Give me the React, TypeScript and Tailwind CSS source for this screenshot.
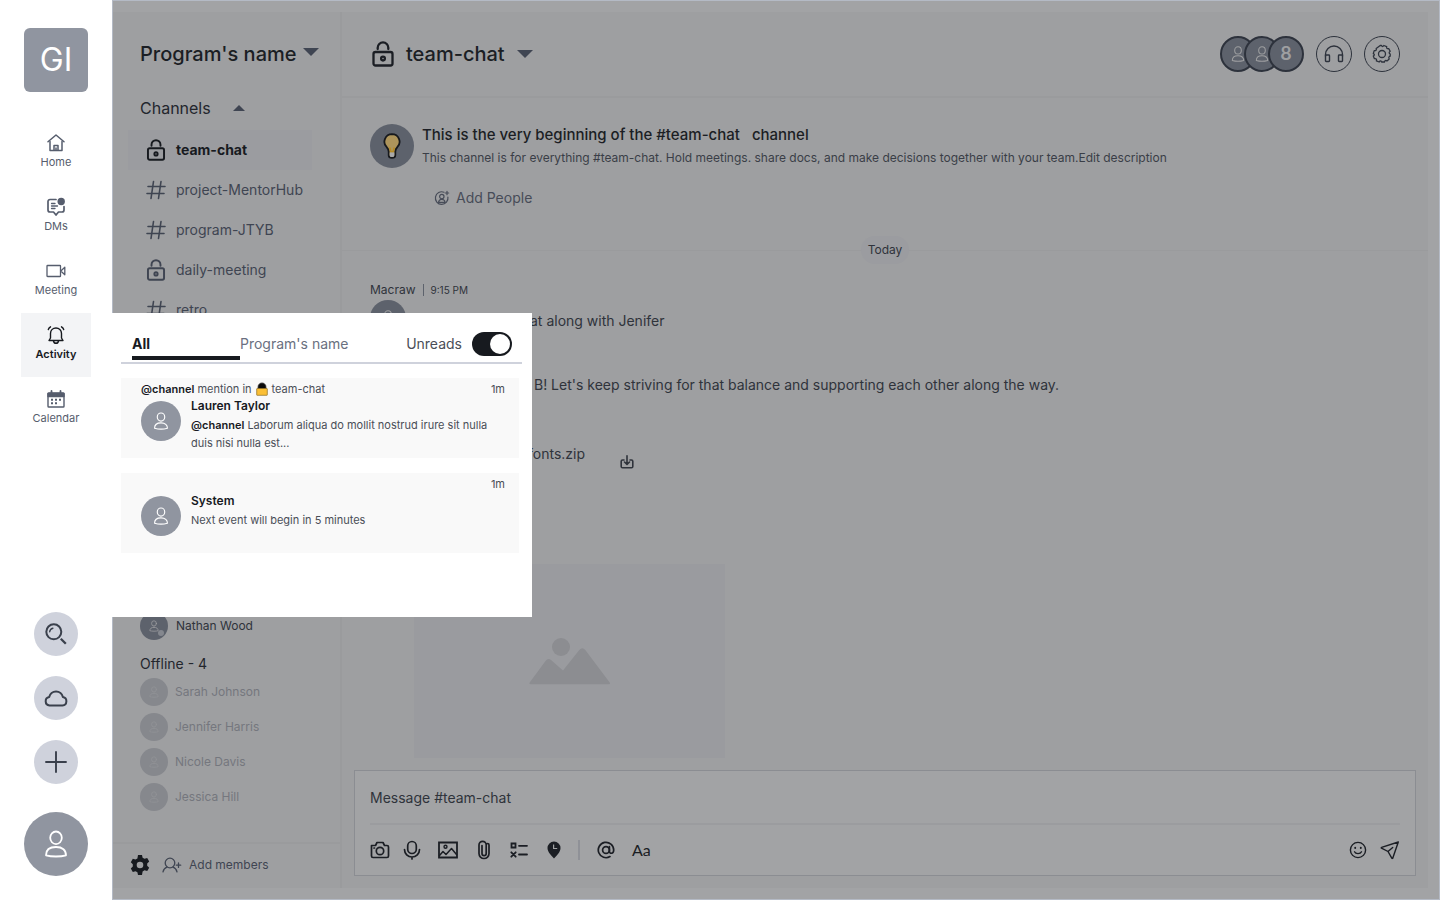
import React from "react";

type IconProps = { className?: string };

function Svg({ box, className, sw = 1.5, children }: { box: string; className?: string; sw?: number; children: React.ReactNode }) {
  return (
    <svg viewBox={box} className={className} fill="none" stroke="currentColor" strokeWidth={sw} strokeLinecap="round" strokeLinejoin="round" aria-hidden="true">
      {children}
    </svg>
  );
}

const HomeIcon = () => (
  <Svg box="0 0 18 18" className="h-[18px] w-[18px]" sw={1.5}>
    <path d="M1 7.8L9 1l8 6.8" />
    <path d="M3 7.500v9h12v-9M7 16.500v-5h4v5M9 14v2" />
  </Svg>
);
const DmIcon = () => (
  <Svg box="0 0 20 20" className="h-5 w-5" sw={1.7}>
    <path d="M10 2.500H4a2 2 0 0 0-2 2V13a2 2 0 0 0 2 2h3.500l2.500 3 2.500-3H16a2 2 0 0 0 2-2V9.500" />
    <path d="M5.500 6.500h3.500M5.500 9h6M5.500 11.500h3.500" strokeWidth="1.300" />
    <circle cx="15.200" cy="4.500" r="3.700" fill="currentColor" stroke="none" />
  </Svg>
);
const VideoIcon = () => (
  <Svg box="0 0 20 14" className="h-[14px] w-5" sw={1.3}>
    <rect x="1" y="1.500" width="13.500" height="11" rx="0.600" />
    <path d="M14.800 7l4-3.800v7.600z" />
  </Svg>
);
const BellIcon = () => (
  <Svg box="0 0 18 20" className="h-5 w-[18px]" sw={1.4}>
    <path d="M2 15.500h14l-1.500-2.500V8.500C14.500 5 12 3 9 3S3.500 5 3.500 8.500V13z" />
    <path d="M6.500 16c.3 1.500 1.200 2.300 2.500 2.300s2.200-.8 2.500-2.300M1.300 4.500c.4-1.200 1.100-2 2.200-2.700M16.700 4.500c-.4-1.200-1.100-2-2.200-2.700" />
  </Svg>
);
const CalendarIcon = () => (
  <Svg box="0 0 18 18" className="h-[18px] w-[18px]" sw={1.4}>
    <rect x="1" y="3" width="16" height="14" rx="0.800" />
    <path d="M1 3.500h16v3H1z" fill="currentColor" />
    <path d="M4.500 1v3M13.500 1v3" strokeWidth="1.800" />
    <path d="M4 9.800h2M8 9.800h2M12 9.800h2M4 13.300h2M8 13.300h2" strokeWidth="2" strokeLinecap="butt" />
  </Svg>
);
const SearchIcon = () => (
  <Svg box="0 0 22 22" className="h-[22px] w-[22px]" sw={2}>
    <circle cx="8.800" cy="8.800" r="7.500" />
    <path d="M4.700 8.800a4 4 0 0 1 3.200-3.600" strokeWidth="1.400" />
    <path d="M15.800 15.800l5 5" strokeWidth="2.300" strokeLinecap="butt" />
  </Svg>
);
const CloudIcon = () => (
  <Svg box="0 0 24 18" className="h-[18px] w-6" sw={2}>
    <path d="M5.500 16.500h13a4.300 4.300 0 0 0 .4-8.500 7 7 0 0 0-13.700 0 4.300 4.300 0 0 0 .3 8.500z" />
  </Svg>
);
const PlusIcon = () => (
  <Svg box="0 0 22 22" className="h-[22px] w-[22px]" sw={1.9}>
    <path d="M11 1v20M1 11h20" />
  </Svg>
);
const PersonIcon = ({ className }: IconProps) => (
  <Svg box="0 0 24 28" className={className} sw={1.8}>
    <ellipse cx="12" cy="7.800" rx="5.800" ry="6.300" />
    <path d="M12 17c6.500 0 10 3.200 10 8.300-5.500 1.600-14.500 1.600-20 0C2 20.200 5.500 17 12 17z" />
  </Svg>
);
const LockIcon = ({ className }: IconProps) => (
  <Svg box="0 0 22 26" className={className} sw={2.3}>
    <rect x="1.500" y="11" width="19" height="13.500" rx="2" />
    <path d="M5.700 8V6.700a5.300 5.300 0 0 1 10.600 0V8" />
    <circle cx="11" cy="17.600" r="1.900" />
  </Svg>
);
const HashIcon = () => (
  <Svg box="0 0 20 20" className="h-5 w-5" sw={1.6}>
    <path d="M7.500 1.500L5 18.500M15 1.500l-2.500 17M2 6.500h17M1 13.500h17" />
  </Svg>
);
const Caret = ({ up, className }: { up?: boolean; className?: string }) => (
  <svg viewBox="0 0 16 8" className={className} fill="currentColor" aria-hidden="true">
    <path d={up ? "M0 8l8-8 8 8z" : "M0 0h16L8 8z"} />
  </svg>
);
const BulbIcon = () => (
  <svg viewBox="0 0 18 26" className="h-[26px] w-[18px]" aria-hidden="true">
    <path d="M9 1.200a7.600 7.600 0 0 0-5.300 13c1.300 1.400 2 2.700 2 4.500v3.500c0 1.500 1.300 2.600 3.300 2.600s3.300-1.100 3.300-2.600v-3.500c0-1.800.7-3.100 2-4.500A7.600 7.600 0 0 0 9 1.200z" fill="#ad945b" stroke="#17191d" strokeWidth="1.800" />
    <path d="M6.700 14.500l1.200 4.300h2.200l1.200-4.300" fill="none" stroke="#b58a22" strokeWidth="1.500" />
    <path d="M6.700 19.500h4.600v3a2.300 1.500 0 0 1-4.600 0z" fill="#a8a9ab" />
  </svg>
);
const AddPersonRound = () => (
  <Svg box="0 0 16 16" className="h-4 w-4" sw={1.2}>
    <path d="M10 2.200A6.300 6.300 0 1 0 13.900 7" />
    <circle cx="7.800" cy="6.600" r="2.200" />
    <path d="M4.500 12.300c.3-2 1.500-3 3.300-3s3 1 3.300 3zM13 1.300v3.400M11.300 3h3.400" />
  </Svg>
);
const AddPersonIcon = () => (
  <Svg box="0 0 20 16" className="h-4 w-5" sw={1.3}>
    <circle cx="8" cy="6" r="4.800" />
    <path d="M1 14.800c.6-2.500 2-3.900 4-4.600M15 14.800c-.6-2.500-2-3.900-4-4.600M16.500 6v4.400M14.300 8.200h4.400" />
  </Svg>
);
const HeadphonesIcon = () => (
  <Svg box="0 0 20 18" className="h-[18px] w-5" sw={1.4}>
    <path d="M1.500 11V9.500a8.500 8.500 0 0 1 17 0V11" />
    <rect x="1.500" y="10" width="4" height="6.500" rx="0.700" />
    <rect x="14.500" y="10" width="4" height="6.500" rx="0.700" />
  </Svg>
);
const GearOutline = () => (
  <Svg box="0 0 20 20" className="h-5 w-5" sw={1.3}>
    <path d="M8.200 1.500h1.300c.6 1.300 1.500 1.300 2.300 0l2.900 1.100c-.4 1.600.3 2.400 2 2l1.500 2.700c-1.400.9-1.400 2 0 2.700v2.200c-1.400.4-1.800 1.300-1 2.700l-2.200 2c-1.400-.8-2.300-.4-2.600 1.100H9.600c-.6-1.400-1.600-1.400-2.400 0l-2.800-1.200c.4-1.600-.2-2.400-2-2.100L1.300 12c1.400-.7 1.400-1.600 0-2.400l.9-3c1.700.3 2.500-.5 2-2.100z" />
    <circle cx="10" cy="10" r="3.500" />
  </Svg>
);
const GearSolid = () => (
  <svg viewBox="0 0 20 20" className="h-5 w-5" fill="currentColor" fillRule="evenodd" aria-hidden="true">
    <path d="M8 0h4l.6 2.700 1.900 1.100 2.700-.8 2 3.400-2 2v2.300l2 2-2 3.400-2.700-.8-1.900 1.100L12 20H8l-.6-2.700-1.900-1.100-2.700.8-2-3.400 2-2V9.200l-2-2 2-3.400 2.700.8 1.900-1.100zM10 6.700a3.300 3.300 0 1 0 0 6.600 3.300 3.300 0 0 0 0-6.600z" />
  </svg>
);
const CameraIcon = () => (
  <Svg box="0 0 20 18" className="h-[18px] w-5" sw={1.7}>
    <path d="M1.500 4.500h4L7 1.500h6l1.500 3h2.500a1.500 1.500 0 0 1 1.500 1.500v9a1.500 1.500 0 0 1-1.500 1.500H3A1.500 1.500 0 0 1 1.500 15z" />
    <circle cx="10" cy="10" r="3.700" />
    <path d="M4 7h.5" />
  </Svg>
);
const MicIcon = () => (
  <Svg box="0 0 18 20" className="h-5 w-[18px]" sw={1.7}>
    <rect x="4.700" y="1.500" width="8.600" height="12" rx="4.300" />
    <path d="M1.500 9.500a7.500 7.500 0 0 0 15 0M9 17v2" />
  </Svg>
);
const PictureIcon = () => (
  <Svg box="0 0 20 18" className="h-[18px] w-5" sw={1.8}>
    <path d="M1 1.500h18v15H1z" strokeLinejoin="miter" />
    <circle cx="7.500" cy="5.800" r="1.500" strokeWidth="1.400" />
    <path d="M1.500 14.500L5 10.500l3 3 5.500-6 5 6" strokeWidth="1.500" />
  </Svg>
);
const ClipIcon = () => (
  <Svg box="0 0 14 20" className="h-5 w-[14px]" sw={1.7}>
    <path d="M12 5v8.500a5 5 0 0 1-10 0V5a3.600 3.600 0 0 1 7.200 0v8.500a2.100 2.100 0 0 1-4.200 0V5.500M9.200 5c0-2 2.800-2 2.800 0" />
  </Svg>
);
const ListIcon = () => (
  <Svg box="0 0 18 16" className="h-4 w-[18px]" sw={1.8}>
    <path d="M1.500 1.500h4v4h-4zM9 3.800h8M9 12.500h8M1.300 10.300l4.400 4.400M5.700 10.300l-4.400 4.400" strokeLinejoin="miter" />
  </Svg>
);
const PinIcon = () => (
  <svg viewBox="0 0 14 18" className="h-[18px] w-[14px]" aria-hidden="true">
    <path d="M7 .5a6.500 6.500 0 0 0-6.500 6.600C.5 11 4 14.500 7 17.500c3-3 6.500-6.500 6.500-10.400A6.500 6.500 0 0 0 7 .5z" fill="currentColor" />
    <path d="M6.600 3.500v4h3.600" fill="none" stroke="#a2a3a5" strokeWidth="1.200" />
  </svg>
);
const AtIcon = () => (
  <Svg box="0 0 18 18" className="h-[18px] w-[18px]" sw={1.7}>
    <circle cx="9" cy="9" r="3.400" />
    <path d="M12.400 5.700v4.500c0 3 4.300 2.800 4.300-1.200A7.700 7.700 0 1 0 13 15.600" />
  </Svg>
);
const SmileIcon = () => (
  <Svg box="0 0 18 18" className="h-[18px] w-[18px]" sw={1.4}>
    <circle cx="9" cy="9" r="7.600" />
    <path d="M5.500 10.800c1.200 2.400 5.800 2.400 7 0" />
    <path d="M6.200 6.800v.3M11.800 6.800v.3" strokeWidth="1.900" />
  </Svg>
);
const SendIcon = () => (
  <Svg box="0 0 20 20" className="h-5 w-5" sw={1.4}>
    <path d="M18.300 2L1.600 7.300c-.5.200-.5.700-.1.900L8 11.500l3.800 6.600c.3.500.9.400 1-.1zM8 11.500l4.700-4" />
  </Svg>
);
const DownloadIcon = () => (
  <Svg box="0 0 14 14" className="h-[14px] w-[14px]" sw={1.6}>
    <path d="M4 5H2.500A1.300 1.300 0 0 0 1.200 6.300v5.200a1.300 1.300 0 0 0 1.300 1.300h9a1.300 1.300 0 0 0 1.300-1.300V6.300A1.300 1.300 0 0 0 11.500 5H10M7 .8v8.400M4.500 7L7 9.400 9.500 7" />
  </Svg>
);
const GoldLock = () => (
  <svg viewBox="0 0 12 14" className="mx-1 inline h-[14px] w-3 align-[-3px]" aria-hidden="true">
    <path d="M1.800 7V5a4.200 4.200 0 0 1 8.400 0v2z" fill="#0b0b0c" stroke="#8d8d8d" strokeWidth="0.600" />
    <rect x="0.700" y="6.500" width="10.600" height="6.800" rx="0.500" fill="#fbbf35" stroke="#8a6a1c" strokeWidth="0.700" />
  </svg>
);

const navItems = [
  { label: "Home", Icon: HomeIcon },
  { label: "DMs", Icon: DmIcon },
  { label: "Meeting", Icon: VideoIcon },
  { label: "Activity", Icon: BellIcon, active: true },
  { label: "Calendar", Icon: CalendarIcon },
];
const quickActions = [
  { label: "Search", Icon: SearchIcon },
  { label: "Cloud files", Icon: CloudIcon },
  { label: "Create", Icon: PlusIcon },
];
const channels = [
  { name: "team-chat", locked: true, active: true },
  { name: "project-MentorHub" },
  { name: "program-JTYB" },
  { name: "daily-meeting", locked: true },
  { name: "retro" },
];
const offline = ["Sarah Johnson", "Jennifer Harris", "Nicole Davis", "Jessica Hill"];
const captureTools = [
  { label: "Camera", Icon: CameraIcon },
  { label: "Record audio", Icon: MicIcon },
];
const insertTools = [
  { label: "Image", Icon: PictureIcon },
  { label: "Attach file", Icon: ClipIcon },
  { label: "Checklist", Icon: ListIcon },
  { label: "Location", Icon: PinIcon },
];

function NavRail() {
  return (
    <nav className="flex w-28 shrink-0 flex-col items-center bg-white pt-7 pb-6 text-[#4b5263]">
      <div className="flex h-16 w-16 items-center justify-center rounded-md bg-[#9095a0] text-[32px] text-white">GI</div>
      <ul className="mt-[29px] flex flex-col">
        {navItems.map(({ label, Icon, active }) => (
          <li key={label}>
            <a href="#" className={`flex h-16 w-[70px] flex-col items-center gap-px pt-3 text-[11px] leading-4 ${active ? "bg-[#f3f4f6] font-semibold text-[#171a1f]" : "text-[#565d6d]"}`}>
              <span className="flex h-5 items-center">
                <Icon />
              </span>
              {label}
            </a>
          </li>
        ))}
      </ul>
      <div className="mt-auto flex flex-col gap-5 text-[#3a404c]">
        {quickActions.map(({ label, Icon }) => (
          <button key={label} aria-label={label} className="flex h-11 w-11 items-center justify-center rounded-full bg-[#cfd2dc]">
            <Icon />
          </button>
        ))}
      </div>
      <button aria-label="Profile" className="mt-7 flex h-16 w-16 items-center justify-center rounded-full bg-[#9095a0] text-white">
        <PersonIcon className="h-7 w-6" />
      </button>
    </nav>
  );
}

function ChannelPanel() {
  return (
    <aside className="flex w-[229px] shrink-0 flex-col border-r-2 border-[#9a9b9d] text-[#3f4552]">
      <div className="flex h-[84px] items-center gap-[6px] pl-[27px]">
        <h1 className="text-xl font-medium text-[#1b1e24]">Program's name</h1>
        <Caret className="mb-1 h-2 w-4" />
      </div>
      <button className="flex h-6 items-center gap-[22px] pl-[27px] text-base text-[#23262d]">
        Channels
        <Caret up className="h-[6px] w-3 text-[#3f4552]" />
      </button>
      <ul className="mt-[10px] pr-7 pl-[15px]">
        {channels.map(({ name, locked, active }) => (
          <li key={name}>
            <a href="#" className={`flex h-10 items-center gap-2 pl-4 text-sm ${active ? "bg-[#9b9ca0] font-bold text-[#171a1f]" : ""}`}>
              <span className="flex w-6 justify-center">{locked ? <LockIcon className="h-[22px] w-5" /> : <HashIcon />}</span>
              {name}
            </a>
          </li>
        ))}
      </ul>
      <div className="mt-auto px-[27px] pb-[31px]">
        <div className="flex h-7 items-center gap-2 text-xs text-[#2f333b]">
          <span className="relative flex h-7 w-7 items-center justify-center rounded-full bg-[#5d626c] text-[#9e9fa1]">
            <PersonIcon className="h-3 w-[10px]" />
            <span className="absolute right-1 bottom-1 h-[6px] w-[6px] rounded-full bg-[#85888f]" />
          </span>
          Nathan Wood
        </div>
        <h2 className="mt-3 text-sm leading-6 text-[#23262d]">Offline - 4</h2>
        <ul className="mt-[2px] flex flex-col gap-[7px]">
          {offline.map((name) => (
            <li key={name} className="flex h-7 items-center gap-[7px] text-xs text-[#75777e]">
              <span className="flex h-7 w-7 items-center justify-center rounded-full bg-[#86888d] text-[#929397]">
                <PersonIcon className="h-3 w-[10px]" />
              </span>
              {name}
            </li>
          ))}
        </ul>
      </div>
      <div className="flex h-[46px] items-center border-t-2 border-[#9a9b9d] pb-[2px] pl-[17px]">
        <button aria-label="Settings" className="text-[#171a1f]">
          <GearSolid />
        </button>
        <button className="ml-3 flex items-center gap-[7px] text-xs">
          <AddPersonIcon />
          Add members
        </button>
      </div>
    </aside>
  );
}

function ChatHeader() {
  return (
    <header className="flex h-[86px] items-center border-b-2 border-[#9a9b9d] pr-7 pl-[30px] text-[#2d323c]">
      <button className="flex items-center text-xl font-medium text-[#1b1e24]">
        <LockIcon className="mr-3 h-[26px] w-[22px]" />
        team-chat
        <Caret className="ml-3 h-2 w-4 text-[#3f4552]" />
      </button>
      <div className="ml-auto flex -space-x-3 text-[#9e9fa1]">
        {[0, 1].map((n) => (
          <span key={n} className="flex h-9 w-9 items-center justify-center rounded-full border-2 border-[#2d323c] bg-[#5d626c]">
            <PersonIcon className="h-4 w-[14px]" />
          </span>
        ))}
        <span className="z-10 flex h-9 w-9 items-center justify-center rounded-full border-2 border-[#2d323c] bg-[#5d626c] text-lg font-semibold">8</span>
      </div>
      <button aria-label="Start a call" className="ml-3 flex h-9 w-9 items-center justify-center rounded-full border border-current">
        <HeadphonesIcon />
      </button>
      <button aria-label="Channel settings" className="ml-3 flex h-9 w-9 items-center justify-center rounded-full border border-current">
        <GearOutline />
      </button>
    </header>
  );
}

function Composer() {
  return (
    <form className="mx-3 mb-3 border border-[#8b8d92] bg-[#a2a3a5] px-[15px] text-[#1b1e24]" onSubmit={(e) => e.preventDefault()}>
      <input aria-label="Message" placeholder="Message #team-chat" className="block h-[54px] w-full border-b-2 border-[#9b9c9f] bg-transparent text-sm outline-none placeholder:text-[#2f333b]" />
      <div className="flex h-[50px] items-center">
        <div className="flex items-center gap-[17px]">
          <div className="flex items-center gap-[13px]">
            {captureTools.map(({ label, Icon }) => (
              <button key={label} type="button" aria-label={label}>
                <Icon />
              </button>
            ))}
          </div>
          <div className="flex items-center gap-[19px]">
            {insertTools.map(({ label, Icon }) => (
              <button key={label} type="button" aria-label={label}>
                <Icon />
              </button>
            ))}
          </div>
          <span className="h-5 w-[2px] bg-[#8f9197]" />
          <button type="button" aria-label="Mention someone">
            <AtIcon />
          </button>
          <button type="button" className="font-['Lato',sans-serif] text-base">
            Aa
          </button>
        </div>
        <button type="button" aria-label="Add emoji" className="ml-auto">
          <SmileIcon />
        </button>
        <button type="submit" aria-label="Send" className="ml-[13px]">
          <SendIcon />
        </button>
      </div>
    </form>
  );
}

function Chat() {
  return (
    <main className="flex min-w-0 flex-1 flex-col text-[#2f333b]">
      <ChatHeader />
      <section className="flex h-[138px] gap-2 px-7 pt-[26px]">
        <span className="flex h-11 w-11 shrink-0 items-center justify-center rounded-full bg-[#5d626c]">
          <BulbIcon />
        </span>
        <div>
          <h2 className="text-[15px] leading-[22px] font-medium whitespace-pre text-[#1b1e24]">This is the very beginning of the #team-chat{"   "}channel</h2>
          <p className="text-xs leading-6 text-[#3a3e47]">
            This channel is for everything #team-chat. Hold meetings. share docs, and make decisions together with your team.<a href="#">Edit description</a>
          </p>
          <button className="mt-4 ml-3 flex items-center gap-[6px] text-sm leading-6 text-[#474c58]">
            <AddPersonRound />
            Add People
          </button>
        </div>
      </section>
      <div className="flex h-7 items-center">
        <span className="h-px flex-1 bg-[#9a9b9d]" />
        <span className="rounded-full bg-[#9b9ca0] px-[7px] text-xs leading-7">Today</span>
        <span className="h-px flex-1 bg-[#9a9b9d]" />
      </div>
      <section className="flex-1 px-7 pt-[18px] text-sm">
        <div className="flex h-4 items-center gap-[7px] text-[10px]">
          <span className="text-xs">Macraw</span>
          <span className="h-3 w-px bg-[#5d626c]" />
          <time>9:15 PM</time>
        </div>
        <div className="mt-[2px] flex h-9">
          <span className="flex h-9 w-9 items-center justify-center rounded-full bg-[#5d626c] text-[#9e9fa1]">
            <PersonIcon className="h-4 w-[14px]" />
          </span>
          <p className="ml-[124px] leading-[42px]">at along with Jenifer</p>
        </div>
        <p className="mt-[39px] pl-[164px] leading-5">B! Let's keep striving for that balance and supporting each other along the way.</p>
        <div className="mt-[49px] flex items-start pl-[158px]">
          <span className="leading-5">fonts.zip</span>
          <button aria-label="Download" className="mt-[11px] ml-[35px]">
            <DownloadIcon />
          </button>
        </div>
        <div className="mt-[95px] ml-11 flex h-[194px] w-[311px] items-center justify-center bg-[#9a9b9f] text-[#8c8d91]">
          <svg viewBox="0 0 82 48" className="h-12 w-[82px]" fill="currentColor" aria-hidden="true">
            <circle cx="32" cy="10" r="9" />
            <path d="M.7 45.500L16.500 24q2.500-3.500 5.500-1l12 10.500L50.300 13q3-3.500 6 0l24.400 32.500q1 1.800-1 1.800H1.700q-2 0-1-1.800z" />
          </svg>
        </div>
      </section>
      <Composer />
    </main>
  );
}

function Avatar() {
  return (
    <span className="flex h-10 w-10 shrink-0 items-center justify-center rounded-full bg-[#9095a0] text-white">
      <PersonIcon className="h-[18px] w-4" />
    </span>
  );
}

function ActivityPopover() {
  return (
    <div role="dialog" aria-label="Activity" className="absolute top-[313px] left-28 h-[304px] w-[420px] bg-white px-[9px] pt-4 text-[#4a4e57]">
      <div className="flex h-[35px] w-[401px] border-b-2 border-[#cfd2dc] pl-[11px] text-sm">
        <button className="flex h-[31px] w-[108px] items-center border-b-4 border-[#171a1f] pt-[3px] font-bold text-[#171a1f]">All</button>
        <button className="flex h-[30px] items-center text-[#6a7080]">Program's name</button>
        <label className="mr-[10px] ml-auto flex h-[30px] items-center gap-[10px]">
          Unreads
          <input type="checkbox" role="switch" defaultChecked className="peer sr-only" />
          <span className="flex h-6 w-10 items-center justify-end rounded-full bg-[#171a1f] px-[2px]">
            <span className="h-5 w-5 rounded-full bg-white" />
          </span>
        </label>
      </div>
      <article className="mt-[14px] h-20 w-[398px] bg-[#f9f9f9] pr-[14px] pl-5 text-[11px]">
        <div className="flex h-[23px] items-center justify-between">
          <p>
            <b className="font-semibold text-[#171a1f]">@channel</b> mention in
            <GoldLock />
            team-chat
          </p>
          <time>1m</time>
        </div>
        <div className="flex gap-[10px]">
          <Avatar />
          <div className="-mt-1">
            <h3 className="text-xs leading-[18px] font-semibold text-[#171a1f]">Lauren Taylor</h3>
            <p className="mt-[1px] leading-[18px]">
              <b className="font-semibold text-[#171a1f]">@channel</b> Laborum aliqua do mollit nostrud irure sit nulla duis nisi nulla est...
            </p>
          </div>
        </div>
      </article>
      <article className="mt-[15px] h-20 w-[398px] bg-[#f9f9f9] pr-[14px] pl-5 text-[11px]">
        <div className="flex h-[23px] items-center justify-end">
          <time>1m</time>
        </div>
        <div className="flex gap-[10px]">
          <Avatar />
          <div className="-mt-1">
            <h3 className="text-xs leading-[18px] font-semibold text-[#171a1f]">System</h3>
            <p className="mt-[1px] leading-[18px]">Next event will begin in 5 minutes</p>
          </div>
        </div>
      </article>
    </div>
  );
}

export default function App() {
  return (
    <div className="relative flex min-h-screen bg-white font-['Inter',sans-serif]">
      <NavRail />
      <div className="flex min-w-0 flex-1 border border-[#b4bac5] bg-[#a2a3a5] py-[11px] pr-[11px]">
        <div className="flex min-w-0 flex-1 bg-[#9e9fa1]">
          <ChannelPanel />
          <Chat />
        </div>
      </div>
      <ActivityPopover />
    </div>
  );
}
